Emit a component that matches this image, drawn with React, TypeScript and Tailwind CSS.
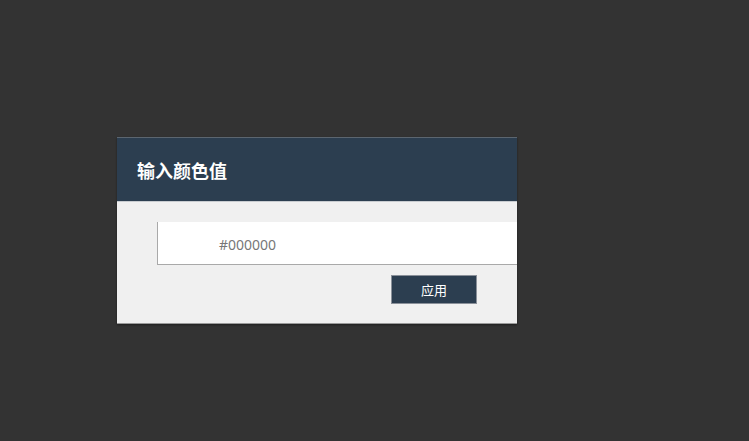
export default function App() {
  return (
    <div className="min-h-screen w-full bg-[#333333] pt-[137px] pl-[117px]" style={{ fontFamily: '"Noto Sans", "Noto Sans CJK SC", sans-serif' }}>
      <div className="w-[400px] overflow-hidden shadow-[0_1px_2px_rgba(0,0,0,0.4)]">
        <div className="flex h-[64px] items-center border-t border-[#5c6670] bg-[#2c3e50] px-5 pt-[2px]">
          <h2 className="text-[18px] font-bold leading-none text-white">输入颜色值</h2>
        </div>
        <div className="border-t border-[#c8ccd0] bg-[#f0f0f0] pt-[20px] pb-[19px] pl-10 pr-10 border-b border-b-[#9a9a9a]">
          <div className="flex h-[43px] w-[420px] items-center border-b border-l border-[#a9a9a9] bg-white pl-[61px] pt-[3px]">
            <span className="text-[14px] text-[#777777]">#000000</span>
          </div>
          <div className="mt-[10px] flex justify-end">
            <button className="h-[29px] w-[86px] border border-[#8a9099] bg-[#2c3e50] pt-[2px] text-[13px] text-white">
              应用
            </button>
          </div>
        </div>
      </div>
    </div>
  );
}
